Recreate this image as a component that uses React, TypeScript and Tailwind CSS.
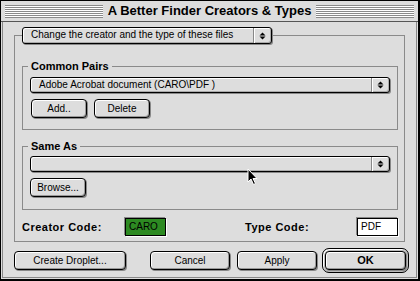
import React from 'react';

const face = { fontFamily: '"Liberation Sans", Arial, sans-serif' };

function Arrows() {
  return (
    <svg width="7" height="10" viewBox="0 0 7 10">
      <polygon points="0.5,4.5 3.5,1.5 6.5,4.5" fill="#000" />
      <polygon points="0.5,5.5 3.5,8.5 6.5,5.5" fill="#000" />
    </svg>
  );
}

function Popup({ text, className }: { text?: string; className: string }) {
  return (
    <div
      className={
        'flex items-stretch rounded-[3px] border border-black bg-[#dddddd] shadow-[inset_1px_1px_0_#fff,inset_-1px_-1px_0_#aaa,1px_1px_0_#888] ' +
        className
      }
    >
      <div className="flex-1 pl-[8px] text-[10px] leading-[14px] text-black whitespace-nowrap overflow-hidden">{text}</div>
      <div className="w-[18px] border-l border-[#888] flex items-center justify-center shadow-[inset_1px_0_0_#fff]">
        <Arrows />
      </div>
    </div>
  );
}

function Btn({ children, className }: { children: React.ReactNode; className: string }) {
  return (
    <div
      className={
        'h-[19px] shrink-0 flex items-center justify-center rounded-[4px] border border-black bg-[#dddddd] text-[10px] text-black shadow-[inset_1px_1px_0_#fff,inset_-1px_-1px_0_#999,1px_1px_0_#888] ' +
        className
      }
    >
      {children}
    </div>
  );
}

function Stripes() {
  return <div className="flex-1 h-[13px] bg-[repeating-linear-gradient(to_bottom,#8a8a8a_0px,#8a8a8a_1px,#ffffff_1px,#ffffff_2px)]" />;
}

function Field({ value, className }: { value: string; className: string }) {
  return (
    <div
      className={
        'h-[18px] shrink-0 border border-black text-[10px] leading-[16px] pl-[3px] text-black shadow-[-1px_-1px_0_#888,1px_1px_0_#fff] ' +
        className
      }
    >
      {value}
    </div>
  );
}

export default function App() {
  return (
    <div style={face} className="relative w-[420px] h-[281px] bg-[#dddddd] border border-black border-r-2 border-b-2 flex flex-col overflow-hidden">
      {/* Title bar */}
      <div className="h-[21px] shrink-0 flex items-center gap-[5px] px-[4px] border-b border-[#555] bg-[#dddddd]">
        <Stripes />
        <div className="text-[13px] font-bold leading-[16px] text-black whitespace-nowrap">A Better Finder Creators &amp; Types</div>
        <Stripes />
      </div>

      {/* Body */}
      <div className="flex-1 mx-px mb-px border border-t-0 border-[#888] px-[11px]">
        <fieldset className="mt-[5px] border border-[#8a8a8a] pl-[7px] pr-[6px] pt-[16px] pb-[5px]">
          <legend>
            <Popup text="Change the creator and the type of these files" className="w-[250px] h-[17px]" />
          </legend>

          <fieldset className="border border-[#8a8a8a] pl-[7px] pr-[7px] pt-[5px] pb-[11px]">
            <legend className="-ml-[2px] px-[3px] text-[11px] leading-[12px] font-bold text-black">Common Pairs</legend>
            <Popup text="Adobe Acrobat document (CARO\PDF )" className="h-[16px]" />
            <div className="flex gap-[7px] mt-[6px] ml-px">
              <Btn className="w-[56px]">Add..</Btn>
              <Btn className="w-[56px]">Delete</Btn>
            </div>
          </fieldset>

          <fieldset className="mt-[10px] border border-[#8a8a8a] pl-[7px] pr-[7px] pt-[4px] pb-[12px]">
            <legend className="-ml-[2px] px-[3px] text-[11px] leading-[12px] font-bold text-black">Same As</legend>
            <Popup className="h-[16px]" />
            <div className="flex mt-[6px]">
              <Btn className="w-[56px]">Browse...</Btn>
            </div>
          </fieldset>

          <div className="flex items-center mt-[8px]">
            <div className="w-[103px] shrink-0 text-[11px] font-bold tracking-[0.5px] text-black">Creator Code:</div>
            <Field value="CARO" className="w-[41px] bg-[#2d8a22]" />
            <div className="ml-[79px] w-[112px] shrink-0 text-[11px] font-bold tracking-[0.5px] text-black">Type Code:</div>
            <Field value="PDF" className="w-[41px] bg-white" />
          </div>
        </fieldset>

        <div className="flex items-center mt-[6px]">
          <Btn className="w-[112px]">Create Droplet...</Btn>
          <Btn className="w-[80px] ml-[24px]">Cancel</Btn>
          <Btn className="w-[80px] ml-[7px]">Apply</Btn>
          <div className="shrink-0 ml-[5px] rounded-[7px] border border-black p-[2px] bg-[#bbbbbb] shadow-[inset_1px_1px_0_#fff]">
            <Btn className="w-[81px] font-bold text-[11px]">OK</Btn>
          </div>
        </div>
      </div>

      {/* Mouse pointer */}
      <svg className="absolute left-[246px] top-[167px]" width="12" height="18" viewBox="0 0 12 18">
        <polygon points="1,1 1,14 4,11 6.5,16.5 8.5,15.5 6,10.5 10,10.5" fill="#000" stroke="#fff" strokeWidth="1" />
      </svg>
    </div>
  );
}
